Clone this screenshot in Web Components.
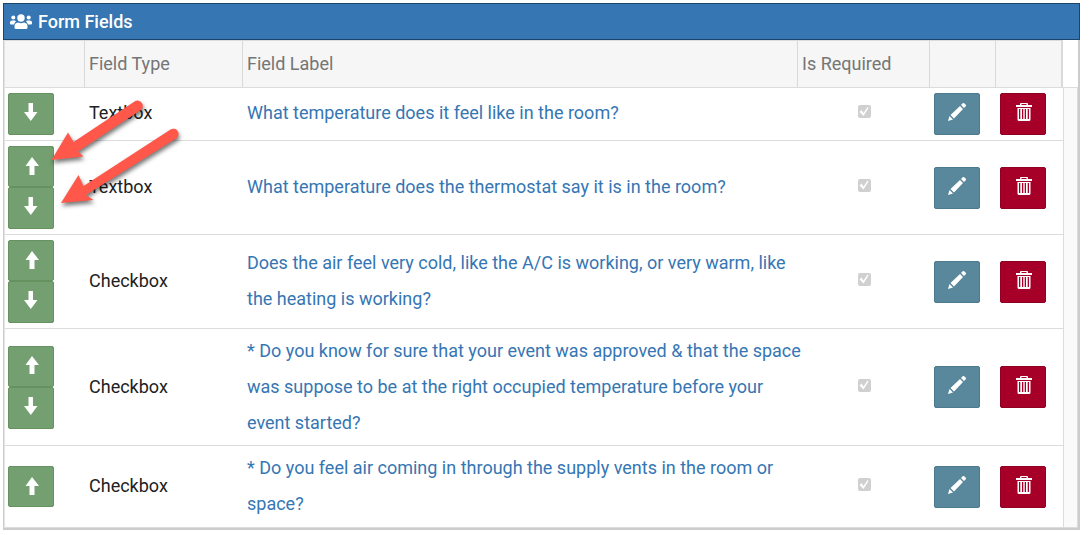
<!DOCTYPE html>
<html lang="en">
<head>
<meta charset="utf-8">
<title>Form Fields</title>
<style>
body { margin: 3px 10px 5px 3px; background: #fff; font-family: Roboto, "Liberation Sans", sans-serif; font-size: 18px; color: #212121; }
</style>
</head>
<body>
<form-panel>
  <span slot="title">Form Fields</span>
  <field-grid></field-grid>
  <pointer-arrow slot="notes"></pointer-arrow>
</form-panel>

<template id="panel">
  <style>
    :host { display: block; position: relative; }
    header { display: flex; align-items: center; gap: 6px; box-sizing: border-box; height: 37px; padding: 0 6px; background: #3576b3; border: 1px solid #1b456c; color: #fff; }
    h1 { margin: 0; font-size: 18px; line-height: 24px; font-weight: 500; }
    svg { width: 22px; height: 16px; fill: #fff; }
    main { border: solid #ccc; border-width: 0 2px 2px 1px; padding: 0 0 0 1px; box-shadow: inset 1px 0 #e4e4e4; }
  </style>
  <header>
    <svg viewBox="0 0 22 16" aria-hidden="true">
      <circle cx="11" cy="4" r="3.700"/><circle cx="3.300" cy="3.500" r="2"/><circle cx="18.700" cy="3.500" r="2"/>
      <path d="M8 8.500q3 1.500 6 0 3.500.5 3.500 4V13.500q0 1.500-1.500 1.500H6q-1.500 0-1.500-1.500v-1q0-3.500 3.500-4z"/>
      <path d="M2 6.500h2.500q.8 0 1.500.7Q4.500 8.500 4.200 10.500H1q-1 0-1-1v-1q0-2 2-2zM20 6.500h-2.500q-.8 0-1.500.7 1.500 1.300 1.800 3.300H21q1 0 1-1v-1q0-2-2-2z"/>
    </svg>
    <h1><slot name="title"></slot></h1>
  </header>
  <main><slot></slot></main>
  <slot name="notes"></slot>
</template>

<template id="grid">
  <style>
    :host { display: flex; }
    table { flex: 1; min-width: 0; border-collapse: separate; border-spacing: 0; table-layout: fixed; }
    th, td { box-sizing: border-box; border-bottom: 1px solid #dcdcdc; padding: 4px; text-align: left; vertical-align: middle; }
    th { height: 48px; padding: 0 4px 2px; background: #f6f6f6; border-top: 1px solid #dcdcdc; border-right: 1px solid #d9d9d9; color: #757575; font-weight: 400; }
    th:last-child { border-right-width: 2px; }
    td { line-height: 36px; }
    tr:first-child td, tr:nth-child(2) td, tr:nth-child(3) td { padding: 3px 4px 5px; }
    tr:last-child td { padding: 4px 4px 5px; }
    tr td.tool { padding: 5px 4px; line-height: 0; }
    tr td.tool:first-child { padding-left: 3px; }
    tr td.check { text-align: center; line-height: 0; padding-bottom: 8px; }
    a { display: block; margin-right: -8px; color: #3576b3; text-decoration: none; }
    .stack { display: flex; flex-direction: column; }
    .gutter { box-sizing: border-box; width: 15px; margin-top: 47px; border: 1px solid #dcdcdc; background: #fafafa; }
    .c1 { width: 80px; } .c2 { width: 158px; } .c4 { width: 132px; } .c5 { width: 66px; } .c6 { width: 67px; }
    input { appearance: none; width: 13px; height: 13px; margin: 0; border-radius: 2px; background: #d0d0d0; }
    input::before { content: ""; display: block; width: 13px; height: 13px; background: #fff; clip-path: polygon(2px 7px, 4px 5px, 6px 8px, 10px 2px, 11px 3px, 6px 11px); }
  </style>
  <table>
    <colgroup><col class="c1"><col class="c2"><col><col class="c4"><col class="c5"><col class="c6"></colgroup>
    <thead><tr><th></th><th>Field Type</th><th>Field Label</th><th>Is Required</th><th></th><th></th></tr></thead>
    <tbody></tbody>
  </table>
  <div class="gutter"></div>
</template>

<template id="button">
  <style>
    :host { display: block; width: 46px; height: 42px; }
    :host([kind="up"]) { height: 41px; }
    button { display: grid; place-items: center; box-sizing: border-box; width: 100%; height: 100%; margin: 0; padding: 0 0 4px; border: 1px solid #66925f; border-radius: 2px; background: #739f71; color: #fff; }
    :host([kind="up"]) button { padding: 0 0 2px 2px; }
    :host([kind="edit"]) button { background: #59879b; border-color: #4c7a8f; }
    :host([kind="delete"]) button { background: #a70028; border-color: #900022; padding-left: 2px; }
    svg { display: block; width: 20px; height: 20px; fill: currentColor; }
  </style>
  <button type="button"><svg viewBox="0 0 20 20" aria-hidden="true"></svg></button>
</template>

<template id="arrows">
  <style>
    :host { display: block; position: absolute; left: 47px; top: 92px; width: 140px; height: 120px; pointer-events: none; }
    svg { display: block; filter: drop-shadow(1px 3px 2px #0008); }
  </style>
  <svg width="140" height="120" viewBox="50 95 140 120" fill="#ff584b" aria-hidden="true">
    <path d="M51.500 160 68 132.500 73.500 142 134.500 101.500A5.200 5.200 0 0 1 140.500 110.300L78 151.500 83.500 156.500Z"/>
    <path d="M61 203 78.500 175 83.500 186 170.500 129.500A5.200 5.200 0 0 1 176 138.500L86 195 93.500 200Z"/>
  </svg>
</template>

<script>
const stamp = (host, id) => {
  const root = host.attachShadow({ mode: "open" });
  root.append(document.getElementById(id).content.cloneNode(true));
  return root;
};

const icons = {
  down: ["Move down", '<path d="M7.500 1h4.500v9h4.500l-6.700 9L3 10h4.500z"/>'],
  up: ["Move up", '<path d="M7.500 19h5v-9H17L10 1 3.500 10h4z"/>'],
  edit: ["Edit", '<path d="M1 19l1.500-5 3.500 3.500zM3.500 13 13 4l3 3-9 9.500zM14 3l1.700-1.700q.8-.6 1.500 0L18.800 2.800q.6.800 0 1.500L17 6z"/>'],
  delete: ["Delete", '<path fill-rule="evenodd" d="M6 3V2q0-1 1-1h6q1 0 1 1v1h4v2H2V3zM7.500 3h5V2h-5zM3.500 6h13v11.500q0 1.500-1.500 1.500H5q-1.500 0-1.500-1.500zM5 7v10h1.300V7zM8 7v10h1.300V7zM10.700 7v10H12V7zM13.700 7v10H15V7z"/>']
};

customElements.define("icon-button", class extends HTMLElement {
  connectedCallback() {
    if (this.shadowRoot) return;
    const root = stamp(this, "button");
    const [label, shape] = icons[this.getAttribute("kind")];
    root.querySelector("button").setAttribute("aria-label", label);
    root.querySelector("svg").innerHTML = shape;
  }
});

const fields = [
  { type: "Textbox", label: "What temperature does it feel like in the room?" },
  { type: "Textbox", label: "What temperature does the thermostat say it is in the room?" },
  { type: "Checkbox", label: "Does the air feel very cold, like the A/C is working, or very warm, like the heating is working?" },
  { type: "Checkbox", label: "* Do you know for sure that your event was approved & that the space was suppose to be at the right occupied temperature before your event started?" },
  { type: "Checkbox", label: "* Do you feel air coming in through the supply vents in the room or space?" }
];

customElements.define("field-grid", class extends HTMLElement {
  constructor() {
    super();
    const body = stamp(this, "grid").querySelector("tbody");
    fields.forEach((field, i) => {
      const row = body.insertRow();
      row.innerHTML = `
        <td class="tool"><div class="stack">
          ${i > 0 ? '<icon-button kind="up"></icon-button>' : ""}
          ${i < fields.length - 1 ? '<icon-button kind="down"></icon-button>' : ""}
        </div></td>
        <td>${field.type}</td>
        <td><a href="#field-${i + 1}"></a></td>
        <td class="check"><input type="checkbox" checked disabled aria-label="Is Required"></td>
        <td class="tool"><icon-button kind="edit"></icon-button></td>
        <td class="tool"><icon-button kind="delete"></icon-button></td>`;
      row.querySelector("a").textContent = field.label;
    });
  }
});

customElements.define("form-panel", class extends HTMLElement {
  constructor() { super(); stamp(this, "panel"); }
});

customElements.define("pointer-arrow", class extends HTMLElement {
  constructor() { super(); stamp(this, "arrows"); }
});
</script>
</body>
</html>
